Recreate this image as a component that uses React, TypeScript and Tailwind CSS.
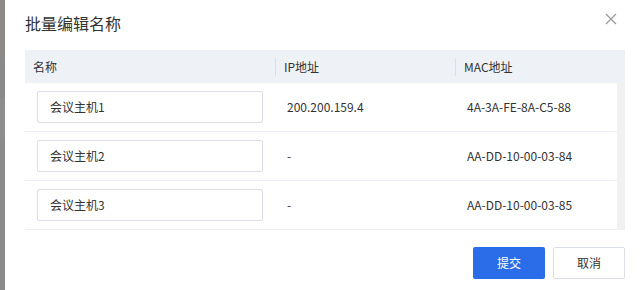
import React from "react";

const rows = [
  { name: "会议主机1", ip: "200.200.159.4", mac: "4A-3A-FE-8A-C5-88" },
  { name: "会议主机2", ip: "-", mac: "AA-DD-10-00-03-84" },
  { name: "会议主机3", ip: "-", mac: "AA-DD-10-00-03-85" },
];

export default function App() {
  return (
    <div className="flex h-[290px] w-[643px] overflow-hidden bg-white font-['Noto_Sans_CJK_SC',sans-serif] text-[#333]">
      {/* overlay strip behind the dialog */}
      <div className="flex w-[5px] flex-col">
        <div className="h-[58px] bg-[#8e8a86]" />
        <div className="h-[40px] bg-[#8a8a8a]" />
        <div className="h-[40px] bg-[#8d8d8d]" />
        <div className="flex-1 bg-[#8b8b8b]" />
      </div>

      <div className="flex flex-1 flex-col pl-5 pr-[18px]">
        <div className="flex h-[50px] items-start justify-between pt-[10px]">
          <span className="text-[16px] leading-[26px] text-[#333]">批量编辑名称</span>
          <button className="mr-[8px] mt-[3px] text-[#999]">
            <svg width="12" height="12" viewBox="0 0 12 12" fill="none" stroke="currentColor" strokeWidth="1.2">
              <path d="M1 1L11 11M11 1L1 11" />
            </svg>
          </button>
        </div>

        <div className="flex w-[600px]">
          <div className="w-[592px]">
            <div className="flex h-[33px] items-center bg-[#eef1f6] text-[12px] text-[#333]">
              <div className="w-[250px] px-2">名称</div>
              <div className="h-[18px] w-px bg-[#dcdfe6]" />
              <div className="w-[179px] px-2">IP地址</div>
              <div className="h-[18px] w-px bg-[#dcdfe6]" />
              <div className="flex-1 px-2">MAC地址</div>
            </div>
            {rows.map((r) => (
              <div key={r.name} className="flex h-[49px] items-center border-b border-[#ebeef5] text-[12px]">
                <div className="w-[250px] px-3">
                  <div className="flex h-8 items-center rounded-[2px] border border-[#dcdfe6] px-3 text-[12px] text-[#333]">
                    {r.name}
                  </div>
                </div>
                <div className="w-[180px] px-3">{r.ip}</div>
                <div className="flex-1 px-3">{r.mac}</div>
              </div>
            ))}
          </div>
          <div className="flex w-[8px] flex-col">
            <div className="h-[33px] bg-[#eef1f6]" />
            <div className="h-[147px] bg-[#f1f1f1]" />
          </div>
        </div>

        <div className="mt-[17px] flex justify-end gap-2">
          <button className="h-8 w-[72px] rounded-[2px] bg-[#2b6de9] text-[12px] text-white">提交</button>
          <button className="h-8 w-[72px] rounded-[2px] border border-[#dcdfe6] bg-white text-[12px] text-[#333]">取消</button>
        </div>
      </div>
    </div>
  );
}
